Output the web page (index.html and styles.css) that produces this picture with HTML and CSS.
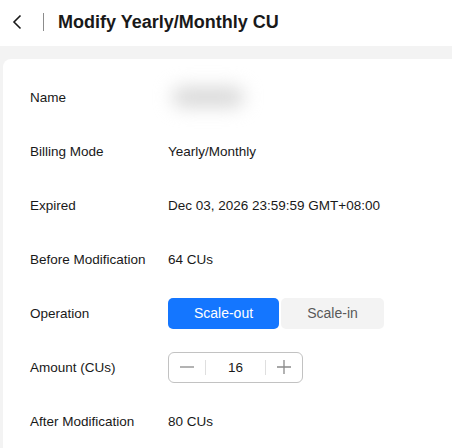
FILE: index.html
```html
<!DOCTYPE html>
<html lang="en">
<head>
  <meta charset="UTF-8">
  <meta name="viewport" content="width=device-width, initial-scale=1.0">
  <title>Modify Yearly/Monthly CU</title>
  <link rel="stylesheet" href="styles.css">
</head>
<body>
  <div class="header">
    <span class="back">
      <svg width="10" height="16" viewBox="0 0 10 16"><path d="M8.5 1.5 L2 8 L8.5 14.5" fill="none" stroke="#191919" stroke-width="1.6"/></svg>
    </span>
    <span class="divider"></span>
    <h1>Modify Yearly/Monthly CU</h1>
  </div>

  <div class="page">
    <div class="card">
      <div class="row">
        <div class="label">Name</div>
        <div class="value"><span class="masked"></span></div>
      </div>
      <div class="row">
        <div class="label">Billing Mode</div>
        <div class="value">Yearly/Monthly</div>
      </div>
      <div class="row">
        <div class="label">Expired</div>
        <div class="value">Dec 03, 2026 23:59:59 GMT+08:00</div>
      </div>
      <div class="row">
        <div class="label">Before Modification</div>
        <div class="value">64 CUs</div>
      </div>
      <div class="row">
        <div class="label">Operation</div>
        <div class="value toggle">
          <button class="opt active">Scale-out</button>
          <button class="opt">Scale-in</button>
        </div>
      </div>
      <div class="row">
        <div class="label">Amount (CUs)</div>
        <div class="value">
          <div class="stepper">
            <span class="step">
              <svg width="14" height="14" viewBox="0 0 14 14"><path d="M0 7 H14" stroke="#8a8a8a" stroke-width="1.3"/></svg>
            </span>
            <span class="num">16</span>
            <span class="step">
              <svg width="14" height="14" viewBox="0 0 14 14"><path d="M0 7 H14 M7 0 V14" stroke="#8a8a8a" stroke-width="1.3"/></svg>
            </span>
          </div>
        </div>
      </div>
      <div class="row">
        <div class="label">After Modification</div>
        <div class="value">80 CUs</div>
      </div>
    </div>
  </div>
</body>
</html>
```

FILE: styles.css
```css
body {
  margin: 0;
  font-family: "Liberation Sans", Arial, sans-serif;
  color: #191919;
  background: #f3f3f3;
  overflow: hidden;
}
.header {
  height: 46px;
  background: #fff;
  display: flex;
  align-items: center;
  padding-left: 12px;
}
.back {
  display: flex;
  width: 10px;
  height: 16px;
  margin-top: -2px;
}
.divider {
  width: 1px;
  height: 18px;
  background: #8c8c8c;
  margin: -2px 14px 0 21px;
}
h1 {
  margin: -2px 0 0;
  font-size: 18px;
  font-weight: bold;
}
.page {
  padding: 13px 0 0 3px;
}
.card {
  background: #fff;
  border-radius: 8px 0 0 0;
  padding: 11px 0 0 27px;
  height: 378px;
}
.row {
  display: flex;
  align-items: center;
  height: 54px;
  font-size: 13.5px;
}
.label {
  width: 138px;
}
.value {
  display: flex;
  align-items: center;
}
.masked {
  display: block;
  width: 72px;
  height: 20px;
  margin-left: 4px;
  background: #d8d8d8;
  border-radius: 10px;
  filter: blur(9px);
}
.toggle {
  gap: 2px;
}
.opt {
  height: 31px;
  border: none;
  border-radius: 5px;
  font-family: inherit;
  font-size: 14px;
  padding: 0;
  background: #f3f3f3;
  color: #595959;
  width: 103px;
}
.opt.active {
  background: #1476ff;
  color: #fff;
  width: 111px;
}
.stepper {
  display: flex;
  align-items: center;
  width: 133px;
  height: 29px;
  border: 1px solid #c2c2c2;
  border-radius: 6px;
}
.step {
  width: 36px;
  height: 15px;
  display: flex;
  align-items: center;
  justify-content: center;
}
.step:first-child {
  border-right: 1px solid #dfdfdf;
}
.step:last-child {
  border-left: 1px solid #dfdfdf;
}
.num {
  flex: 1;
  text-align: center;
}
```
